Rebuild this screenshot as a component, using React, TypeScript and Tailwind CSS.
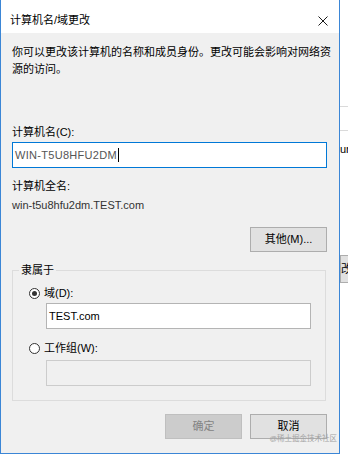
import { useState } from 'react';

function Radio({ checked }: { checked: boolean }) {
  return (
    <span className="flex h-[11px] w-[11px] items-center justify-center rounded-full border border-[#333333] bg-white">
      {checked && <span className="h-[5px] w-[5px] rounded-full bg-[#333333]" />}
    </span>
  );
}

/** Windows "computer name / domain changes" dialog, with a sliver of the window behind it. */
export default function App() {
  const [domain, setDomain] = useState<'domain' | 'workgroup'>('domain');

  return (
    <div className="flex h-[455px] w-[348px] bg-white text-[11px] text-black font-['Liberation_Sans','Noto_Sans_CJK_SC',sans-serif]">
      <div className="flex h-[454px] w-[340px] shrink-0 flex-col border-x border-b border-[#3b86d6] bg-[#f0f0f0]">
        {/* title bar */}
        <div className="flex h-[33px] shrink-0 items-start justify-between bg-white pl-[9px] pr-[11px] pt-[12px]">
          <span className="leading-[17px]">计算机名/域更改</span>
          <span className="flex h-[17px] items-center">
            <svg width="10" height="10" viewBox="0 0 10 10" fill="none" stroke="#1a1a1a" strokeWidth="1">
              <path d="M0.5 0.5 9.5 9.5M9.5 0.5 0.5 9.5" />
            </svg>
          </span>
        </div>

        <div className="flex flex-1 flex-col pl-[11px] pr-[12px] pt-[11px]">
          <p className="w-[322px] leading-[17px]">
            你可以更改该计算机的名称和成员身份。更改可能会影响对网络资源的访问。
          </p>

          <label className="mt-[46px] leading-[17px]">计算机名(C):</label>
          <div className="mt-[1px] flex h-[26px] items-center border border-[#0078d7] bg-white pl-[2px]">
            <span className="text-[#555555] tracking-[0.3px]">WIN-T5U8HFU2DM</span>
            <span className="ml-[1px] h-[14px] w-px bg-black" />
          </div>

          <div className="mt-[10px] leading-[17px]">计算机全名:</div>
          <div className="mt-[2px] leading-[17px] text-[#333333]">win-t5u8hfu2dm.TEST.com</div>

          <div className="mt-[13px] flex justify-end">
            <button className="h-[25px] w-[77px] border border-[#adadad] bg-[#e1e1e1] leading-[17px]">
              其他(M)...
            </button>
          </div>

          <fieldset className="mr-[1px] mt-[10px] min-w-0 border border-[#dcdcdc] p-0">
            <legend className="ml-[6px] px-[2px] leading-[17px]">隶属于</legend>
            <div className="flex flex-col pb-[14px] pl-[16px]">
              <button
                className="mt-[6px] flex h-[17px] items-center gap-[4px]"
                onClick={() => setDomain('domain')}
              >
                <Radio checked={domain === 'domain'} />
                <span className="leading-[17px]">域(D):</span>
              </button>
              <div className="ml-[17px] mt-[1px] flex h-[26px] w-[265px] items-center border border-[#b4b4b4] bg-white pl-[2px]">
                TEST.com
              </div>

              <button
                className="mt-[11px] flex h-[17px] items-center gap-[4px]"
                onClick={() => setDomain('workgroup')}
              >
                <Radio checked={domain === 'workgroup'} />
                <span className="leading-[17px]">工作组(W):</span>
              </button>
              <div className="ml-[17px] mt-[3px] h-[26px] w-[265px] border border-[#cccccc] bg-[#f0f0f0]" />
            </div>
          </fieldset>

          <div className="relative mt-[13px] flex justify-end gap-[8px]">
            <button disabled className="h-[25px] w-[77px] border border-[#bfbfbf] bg-[#cccccc] text-[#838383]">
              确定
            </button>
            <button className="h-[25px] w-[77px] border border-[#adadad] bg-[#e1e1e1]">取消</button>
            <span className="absolute right-[-10px] top-[20px] whitespace-nowrap text-[7.5px] leading-[9px] text-[#a3a3a3]">
              @稀土掘金技术社区
            </span>
          </div>
        </div>
      </div>

      {/* window behind the dialog */}
      <div className="flex w-[8px] flex-col overflow-hidden bg-white">
        <div className="h-[106px] shrink-0" />
        <div className="h-px shrink-0 bg-[#dadada]" />
        <div className="h-[23px] shrink-0" />
        <div className="h-px shrink-0 bg-[#dadada]" />
        <div className="h-[12px] shrink-0" />
        <div className="h-[13px] shrink-0 whitespace-nowrap leading-[13px]">ur</div>
        <div className="h-[99px] shrink-0" />
        <div className="h-[28px] shrink-0 whitespace-nowrap border-y border-l border-[#adadad] bg-[#e1e1e1] leading-[26px]">
          改
        </div>
      </div>
    </div>
  );
}
